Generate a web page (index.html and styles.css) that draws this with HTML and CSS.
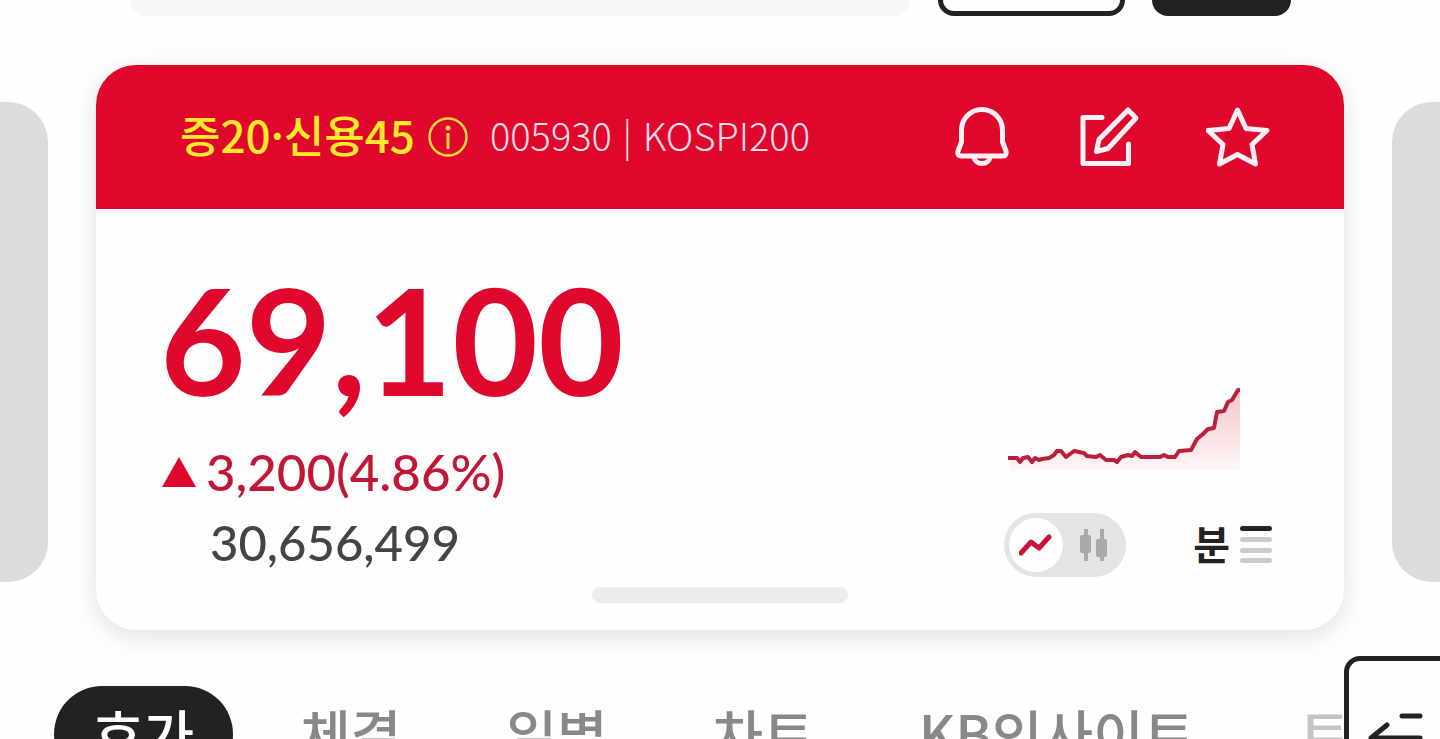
FILE: index.html
```html
<!DOCTYPE html>
<html lang="ko">
<head>
    <meta charset="UTF-8">
    <meta name="viewport" content="width=device-width, initial-scale=1.0">
    <title>005930</title>
    <link rel="stylesheet" href="styles.css">
</head>
<body>
    <header class="top-bar">
        <input class="search-box" type="text" aria-label="종목 검색">
        <button class="top-button outline" aria-label="관심"></button>
        <button class="top-button dark" aria-label="주문"></button>
    </header>

    <main class="carousel">
        <div class="side-card prev"></div>

        <section class="card">
            <div class="card-header">
                <span class="margin-info">증20·신용45</span>
                <button class="icon-button info" aria-label="안내">
                    <svg width="40" height="40" viewBox="0 0 40 40" fill="none" stroke="#ffd83a" stroke-width="2.500">
                        <circle cx="20" cy="20" r="18.500"/>
                        <path d="M20 16v16" stroke-width="3"/>
                        <circle cx="20" cy="11" r="2.500" fill="#ffd83a" stroke="none"/>
                    </svg>
                </button>
                <span class="code">005930 | KOSPI200</span>

                <div class="actions">
                    <button class="icon-button" aria-label="알림">
                        <svg width="64" height="64" viewBox="0 0 64 64">
                            <path d="M11.500 25a20.500 20.500 0 0 1 41 0v12l3.500 9c1 3-.5 5-3 5H11c-2.500 0-4-2-3-5l3.500-9z"/>
                            <path d="M24 52c.5 4 4 6.500 8 6.500s7.500-2.500 8-6.500"/>
                        </svg>
                    </button>
                    <button class="icon-button" aria-label="메모">
                        <svg width="64" height="64" viewBox="0 0 64 64">
                            <path d="M24 12.500H5v46h45.500V39"/>
                            <path d="M50 5l8 8L30 43.500 18.500 46.500l2.500-12z"/>
                        </svg>
                    </button>
                    <button class="icon-button" aria-label="관심종목">
                        <svg width="64" height="64" viewBox="0 0 64 64">
                            <path d="M31.500 5l8.500 18.500 21 2L46 39.500 49.500 59l-18-9.500-18 9.500L17 39.500l-15-14 21-2z"/>
                        </svg>
                    </button>
                </div>
            </div>

            <div class="card-body">
                <div class="quote">
                    <div class="prices">
                        <div class="price">69,100</div>
                        <div class="change">
                            <svg width="34" height="30" viewBox="0 0 34 30"><path d="M17 0l17 30H0z" fill="#df082c"/></svg>
                            <span>3,200(4.86%)</span>
                        </div>
                        <div class="volume">30,656,499</div>
                    </div>

                    <div class="chart-panel">
                        <svg class="chart" width="232" height="84" viewBox="0 0 232 84">
                            <defs>
                                <linearGradient id="area" x1="0" y1="0" x2="0" y2="1">
                                    <stop offset="0" stop-color="#f3c6c9"/>
                                    <stop offset="1" stop-color="#fff6f6"/>
                                </linearGradient>
                            </defs>
                            <path fill="url(#area)" d="M1 71H9L12 75 15 71 20 70 24 75 27 71 31 73 34 72 41 71 46 68 49 64H53L58 70 66 64 76 66 79 69 88 70 92 68 98 73H106L109 75 113 70 120 68 124 69 127 65 133 70H152L156 68 160 70H167L171 64 183 63 189 52 195 47 200 42 206 41 209 25 216 24 220 15 224 13 230 3H232V83H1z"/>
                            <path fill="none" stroke="#b9203b" stroke-width="4" stroke-linejoin="round" d="M0 71H9L12 75 15 71 20 70 24 75 27 71 31 73 34 72 41 71 46 68 49 64H53L58 70 66 64 76 66 79 69 88 70 92 68 98 73H106L109 75 113 70 120 68 124 69 127 65 133 70H152L156 68 160 70H167L171 64 183 63 189 52 195 47 200 42 206 41 209 25 216 24 220 15 224 13 230 3H232"/>
                        </svg>
                        <div class="chart-tools">
                            <div class="toggle">
                                <button class="toggle-item active" aria-label="라인 차트">
                                    <svg width="34" height="22" viewBox="0 0 34 22"><path d="M2 19L12 8l8 6L30 3" fill="none" stroke="#cc1236" stroke-width="5" stroke-linecap="round" stroke-linejoin="round"/></svg>
                                </button>
                                <button class="toggle-item" aria-label="캔들 차트">
                                    <svg width="28" height="32" viewBox="0 0 28 32" fill="#a9a9a9">
                                        <rect x="4" y="0" width="4" height="32"/>
                                        <rect x="0" y="6" width="11" height="18" rx="2"/>
                                        <rect x="20" y="0" width="4" height="32"/>
                                        <rect x="16" y="10" width="11" height="18" rx="2"/>
                                    </svg>
                                </button>
                            </div>
                            <button class="period">
                                <span>분</span>
                                <svg width="32" height="38" viewBox="0 0 32 38" fill="#cbcbcb">
                                    <rect x="0" y="0" width="32" height="5" rx="2.500" fill="#222"/>
                                    <rect x="0" y="11" width="32" height="5" rx="2.500"/>
                                    <rect x="0" y="22" width="32" height="5" rx="2.500"/>
                                    <rect x="0" y="32" width="32" height="5" rx="2.500"/>
                                </svg>
                            </button>
                        </div>
                    </div>
                </div>
                <div class="handle"></div>
            </div>
        </section>

        <div class="side-card next"></div>
    </main>

    <nav class="tabs">
        <button class="tab active">호가</button>
        <button class="tab">체결</button>
        <button class="tab">일별</button>
        <button class="tab">차트</button>
        <button class="tab">KB인사이트</button>
        <button class="tab faded">트</button>
    </nav>

    <button class="side-menu" aria-label="메뉴">
        <svg width="56" height="52" viewBox="0 0 56 52" fill="none" stroke="#222" stroke-width="5" stroke-linecap="round" stroke-linejoin="round">
            <path d="M35 4h18M20 13L4 26l16 13M4 26h49M35 49h18"/>
        </svg>
    </button>
</body>
</html>
```

FILE: styles.css
```css
* {
    box-sizing: border-box;
}

body {
    margin: 0;
    height: 100vh;
    overflow: hidden;
    position: relative;
    background-color: #fefefe;
    color: #222;
    font-family: 'Noto Sans CJK KR', sans-serif;
}

button {
    padding: 0;
    border: none;
    background: none;
    color: inherit;
    font-family: inherit;
    cursor: pointer;
}

svg {
    display: block;
    flex-shrink: 0;
}

/* search row, scrolled mostly out of view */
.top-bar {
    display: flex;
    align-items: flex-end;
    height: 16px;
    padding: 0 149px 0 130px;
    overflow: hidden;
}

.search-box {
    flex: 1;
    min-width: 0;
    height: 96px;
    margin-right: 28px;
    border: none;
    border-radius: 16px;
    background-color: #f7f7f7;
    font-size: 40px;
}

.top-button {
    height: 96px;
    border-radius: 16px;
}

.top-button.outline {
    width: 187px;
    margin-right: 27px;
    border: 5px solid #222;
}

.top-button.dark {
    width: 139px;
    background-color: #222;
}

.carousel {
    display: flex;
    align-items: center;
    gap: 48px;
    margin-top: 49px;
}

.side-card {
    width: 48px;
    height: 480px;
    margin-bottom: 12px;
    background-color: #dcdcdc;
}

.side-card.prev {
    border-radius: 0 40px 40px 0;
}

.side-card.next {
    border-radius: 40px 0 0 40px;
}

.card {
    flex: 1;
    border-radius: 40px;
    background-color: #fefefe;
    box-shadow: 0 6px 24px rgba(0, 0, 0, 0.12);
}

.card-header {
    display: flex;
    align-items: center;
    height: 144px;
    padding: 0 74px 0 84px;
    border-radius: 40px 40px 0 0;
    background-color: #df082c;
}

.margin-info,
.code {
    padding-bottom: 6px;
}

.margin-info {
    margin-right: 13px;
    color: #ffe92a;
    font-size: 44px;
    font-weight: 500;
}

.code {
    margin-left: 22px;
    color: #ffdde8;
    font-size: 38px;
    font-weight: 300;
}

.actions {
    display: flex;
    gap: 64px;
    margin-left: auto;
}

.actions svg {
    fill: none;
    stroke: #fff0f5;
    stroke-width: 5;
    stroke-linecap: round;
    stroke-linejoin: round;
}

.card-body {
    padding: 56px 0 27px;
}

.quote {
    display: flex;
    justify-content: space-between;
    align-items: flex-end;
    padding: 0 72px 0 66px;
    font-family: 'Lato', sans-serif;
}

.price {
    margin-left: -2px;
    color: #df082c;
    font-size: 148px;
    font-weight: 700;
    line-height: 148px;
}

.change {
    display: flex;
    align-items: center;
    gap: 10px;
    margin-top: 24px;
    color: #c31535;
    font-size: 51px;
    font-weight: 500;
    line-height: 70px;
}

.volume {
    padding-left: 48px;
    color: #444;
    font-size: 49px;
    font-weight: 500;
    line-height: 70px;
}

.chart-panel {
    display: flex;
    flex-direction: column;
    gap: 42px;
}

.chart {
    margin-left: 4px;
}

.chart-tools {
    display: flex;
    justify-content: space-between;
    align-items: center;
    gap: 67px;
}

.toggle {
    display: flex;
    gap: 4px;
    padding: 5px;
    border-radius: 32px;
    background-color: #e4e4e4;
}

.toggle-item {
    display: flex;
    align-items: center;
    justify-content: center;
    width: 54px;
    height: 54px;
    border-radius: 27px;
}

.toggle-item.active {
    background-color: #fefefe;
}

.period {
    display: flex;
    align-items: center;
    gap: 10px;
    font-family: 'Noto Sans CJK KR', sans-serif;
    font-size: 40px;
    font-weight: 700;
    line-height: 60px;
}

.period span {
    padding-bottom: 4px;
}

.handle {
    width: 256px;
    height: 16px;
    margin: 10px auto 0;
    border-radius: 8px;
    background-color: #ececec;
}

.tabs {
    display: flex;
    align-items: flex-start;
    gap: 105px;
    margin-top: 56px;
    padding-left: 54px;
}

.tab {
    flex-shrink: 0;
    color: #888;
    font-size: 55px;
    font-weight: 500;
    line-height: 92px;
}

.tab.active {
    margin-right: -38px;
    padding: 0 39px 4px;
    border-radius: 48px;
    background-color: #222;
    color: #fefefe;
}

.tab.faded {
    color: #c4c4c4;
}

/* floating menu over the end of the tabs */
.side-menu {
    position: absolute;
    top: 656px;
    right: -16px;
    padding: 51px 28px 51px 18px;
    border: 5px solid #222;
    border-radius: 16px;
    background-color: #fefefe;
}
```
